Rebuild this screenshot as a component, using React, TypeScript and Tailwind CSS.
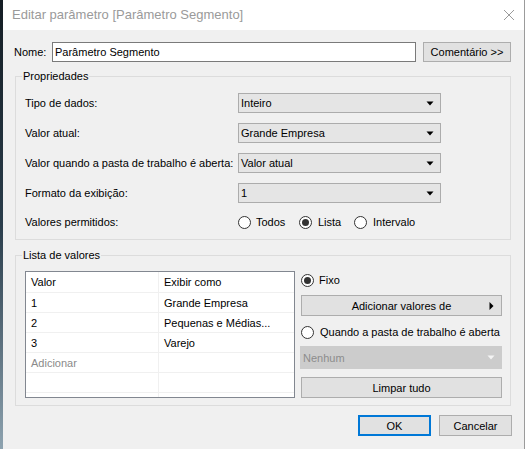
import React from "react";

function Arrow({ color = "#000" }: { color?: string }) {
  return (
    <svg width="8" height="5" viewBox="0 0 8 5" className="shrink-0">
      <path d="M0.5 0.5 H7.5 L4 4.5 Z" fill={color} />
    </svg>
  );
}

function Select({ value }: { value: string }) {
  return (
    <div className="w-[203px] h-[20px] bg-[#e5e5e5] border border-[#acacac] flex items-center justify-between pl-[2px] pr-[6px]">
      <span>{value}</span>
      <Arrow />
    </div>
  );
}

function Radio({ checked }: { checked?: boolean }) {
  return (
    <span className="w-[13px] h-[13px] rounded-full border border-[#333] bg-white flex items-center justify-center shrink-0">
      {checked && <span className="w-[7px] h-[7px] rounded-full bg-[#333]" />}
    </span>
  );
}

function Btn({ children, className = "" }: { children: React.ReactNode; className?: string }) {
  return (
    <div className={`bg-[#e1e1e1] border border-[#adadad] flex items-center justify-center ${className}`}>
      {children}
    </div>
  );
}

const rows: [string, string, boolean?][] = [
  ["Valor", "Exibir como"],
  ["1", "Grande Empresa"],
  ["2", "Pequenas e Médias..."],
  ["3", "Varejo"],
  ["Adicionar", "", true],
  ["", ""],
  ["", ""],
];

export default function App() {
  return (
    <div className="w-[525px] h-[449px] flex overflow-hidden font-['Liberation_Sans',Arial,sans-serif] text-[11px] leading-[16px] text-black">
      <div className="w-[3px] h-full bg-linear-to-b from-[#141d24] via-[#2a3d4b] to-[#8ea3b0]" />
      <div className="flex-1 flex flex-col border-r border-[#9b9b9b] bg-[#f0f0f0]">
        {/* title bar */}
        <div className="h-[30px] bg-white flex items-center justify-between pl-[9px] pr-[9px] shrink-0">
          <span className="text-[13px] text-[#9a9a9a]">Editar parâmetro [Parâmetro Segmento]</span>
          <svg width="12" height="12" viewBox="0 0 12 12">
            <path d="M1 1 L11 11 M11 1 L1 11" stroke="#9a9a9a" strokeWidth="1" />
          </svg>
        </div>

        {/* body */}
        <div className="flex flex-col pt-[12px]">
          <div className="flex items-center pl-[11px]">
            <span className="w-[38px]">Nome:</span>
            <div className="w-[364px] h-[20px] bg-white border border-[#7a7a7a] flex items-center pl-[2px]">
              Parâmetro Segmento
            </div>
            <Btn className="w-[88px] h-[20px] ml-[7px]">Comentário &gt;&gt;</Btn>
          </div>

          <fieldset className="ml-[12px] w-[496px] mt-[6px] border border-[#dcdcdc] pt-[9px] pl-[9px] pb-[7px]">
            <legend className="-ml-[3px] px-[1px] leading-[16px]">Propriedades</legend>
            <div className="flex flex-col gap-[10px]">
              {[
                ["Tipo de dados:", "Inteiro"],
                ["Valor atual:", "Grande Empresa"],
                ["Valor quando a pasta de trabalho é aberta:", "Valor atual"],
                ["Formato da exibição:", "1"],
              ].map(([l, v]) => (
                <div key={l} className="flex items-center h-[20px]">
                  <span className="w-[213px] whitespace-nowrap">{l}</span>
                  <Select value={v} />
                </div>
              ))}
            </div>
            <div className="flex items-center h-[20px] mt-[9px]">
              <span className="w-[213px]">Valores permitidos:</span>
              <div className="flex items-center w-[61px] gap-[5px]">
                <Radio />
                <span>Todos</span>
              </div>
              <div className="flex items-center w-[55px] gap-[6px]">
                <Radio checked />
                <span>Lista</span>
              </div>
              <div className="flex items-center gap-[6px]">
                <Radio />
                <span>Intervalo</span>
              </div>
            </div>
          </fieldset>

          <fieldset className="ml-[12px] w-[496px] mt-[7px] border border-[#dcdcdc] pt-[8px] pl-[9px] pb-[7px]">
            <legend className="-ml-[3px] px-[1px] leading-[16px]">Lista de valores</legend>
            <div className="flex">
              <div className="w-[270px] h-[127px] border border-[#828790] bg-white overflow-hidden">
                {rows.map(([a, b, muted], i) => (
                  <div key={i} className={`flex h-[20px] border-b border-[#f0f0f0] ${i === 0 ? "h-[21px]" : ""}`}>
                    <div className={`w-[133px] border-r border-[#f0f0f0] pl-[5px] flex items-center ${muted ? "text-[#8a8a8a]" : ""}`}>{a}</div>
                    <div className="flex-1 pl-[5px] flex items-center">{b}</div>
                  </div>
                ))}
              </div>
              <div className="w-[201px] ml-[6px] flex flex-col">
                <div className="flex items-center h-[18px] gap-[5px]">
                  <Radio checked />
                  <span>Fixo</span>
                </div>
                <Btn className="h-[21px] mt-[6px] relative">
                  <span>Adicionar valores de</span>
                  <svg width="5" height="8" viewBox="0 0 5 8" className="absolute right-[7px] top-[6px]">
                    <path d="M0.5 0 L4.5 4 L0.5 8 Z" fill="#000" />
                  </svg>
                </Btn>
                <div className="flex items-center h-[18px] mt-[7px] gap-[6px]">
                  <Radio />
                  <span className="whitespace-nowrap">Quando a pasta de trabalho é aberta</span>
                </div>
                <div className="h-[23px] mt-[5px] bg-[#cccccc] border border-[#cccccc] flex items-center justify-between pl-[2px] pr-[6px] text-[#8d8d8d] -ml-[1px] w-[202px]">
                  <span>Nenhum</span>
                  <Arrow color="#f4f4f4" />
                </div>
                <Btn className="h-[21px] mt-[8px]">Limpar tudo</Btn>
              </div>
            </div>
          </fieldset>

          <div className="flex justify-end pr-[12px] mt-[9px] gap-[8px]">
            <div className="w-[73px] h-[21px] bg-[#e1e1e1] border-2 border-[#0078d7] flex items-center justify-center">OK</div>
            <Btn className="w-[73px] h-[21px]">Cancelar</Btn>
          </div>
        </div>
      </div>
    </div>
  );
}
